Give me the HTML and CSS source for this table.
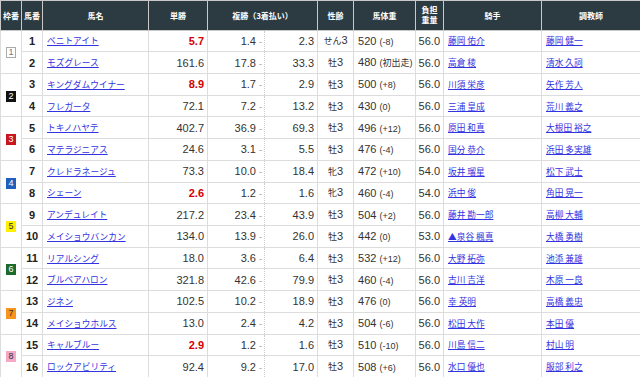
FILE: index.html
```html
<!DOCTYPE html>
<html>
<head>
    <meta charset="utf-8">
    <title>出馬表</title>
    <link rel="stylesheet" href="styles.css">
</head>
<body>
    <table class="race">
        <colgroup>
            <col style="width:21px">
            <col style="width:21px">
            <col style="width:106px">
            <col style="width:59px">
            <col style="width:57px">
            <col style="width:53px">
            <col style="width:36px">
            <col style="width:62px">
            <col style="width:28px">
            <col style="width:98px">
            <col style="width:99px">
        </colgroup>
        <thead>
            <tr>
                <th>枠番</th>
                <th>馬番</th>
                <th>馬名</th>
                <th>単勝</th>
                <th colspan="2">複勝（3着払い）</th>
                <th>性齢</th>
                <th>馬体重</th>
                <th class="load">負担<br>重量</th>
                <th>騎手</th>
                <th>調教師</th>
            </tr>
        </thead>
        <tbody id="rows"></tbody>
    </table>
<script>
var horses = [
    [1, "ベニトアイト", "5.7", true, "1.4", "2.3", "せん", "520", "(-8)", "56.0", "藤岡 佑介", "藤岡 健一"],
    [2, "モズグレース", "161.6", false, "17.8", "33.3", "牡", "480", "(初出走)", "56.0", "高倉 稜", "清水 久詞"],
    [3, "キングダムウイナー", "8.9", true, "1.7", "2.9", "牡", "500", "(+8)", "56.0", "川須 栄彦", "矢作 芳人"],
    [4, "フレガータ", "72.1", false, "7.2", "13.2", "牡", "430", "(0)", "56.0", "三浦 皇成", "荒川 義之"],
    [5, "トキノハヤテ", "402.7", false, "36.9", "69.3", "牡", "496", "(+12)", "56.0", "原田 和真", "大根田 裕之"],
    [6, "マテラジニアス", "24.6", false, "3.1", "5.5", "牡", "476", "(-4)", "56.0", "国分 恭介", "浜田 多実雄"],
    [7, "クレドラネージュ", "73.3", false, "10.0", "18.4", "牝", "472", "(+10)", "54.0", "坂井 瑠星", "松下 武士"],
    [8, "シェーン", "2.6", true, "1.2", "1.6", "牝", "460", "(-4)", "54.0", "浜中 俊", "角田 晃一"],
    [9, "アンデュレイト", "217.2", false, "23.4", "43.9", "牡", "504", "(+2)", "56.0", "藤井 勘一郎", "高柳 大輔"],
    [10, "メイショウバンカン", "134.0", false, "13.9", "26.0", "牡", "442", "(0)", "53.0", "▲泉谷 楓真", "大橋 勇樹"],
    [11, "リアルシング", "18.0", false, "3.6", "6.4", "牡", "532", "(+12)", "56.0", "大野 拓弥", "池添 兼雄"],
    [12, "ブルベアハロン", "321.8", false, "42.6", "79.9", "牡", "460", "(-4)", "56.0", "古川 吉洋", "木原 一良"],
    [13, "ジネン", "102.5", false, "10.2", "18.9", "牡", "476", "(0)", "56.0", "幸 英明", "高橋 義忠"],
    [14, "メイショウホルス", "13.0", false, "2.4", "4.2", "牡", "504", "(-6)", "56.0", "松田 大作", "本田 優"],
    [15, "キャルブルー", "2.9", true, "1.2", "1.6", "牡", "510", "(-10)", "56.0", "川島 信二", "村山 明"],
    [16, "ロックアビリティ", "92.4", false, "9.2", "17.0", "牡", "508", "(+6)", "56.0", "水口 優也", "服部 利之"]
];

var html = "";
for (var i = 0; i < horses.length; i++) {
    var h = horses[i];
    var frame = Math.floor(i / 2) + 1;
    html += "<tr>";
    if (i % 2 == 0) {
        html += '<td rowspan="2" class="waku"><span class="badge w' + frame + '">' + frame + '</span></td>';
    }
    html += '<td class="num">' + h[0] + '</td>';
    html += '<td class="name"><a href="#">' + h[1] + '</a></td>';
    html += '<td class="odds' + (h[3] ? ' fav' : '') + '">' + h[2] + '</td>';
    html += '<td class="place-lo">' + h[4] + ' <span class="dash">-</span></td>';
    html += '<td class="place-hi">' + h[5] + '</td>';
    html += '<td class="sex"><span class="jp">' + h[6] + '</span>3</td>';
    html += '<td class="weight">' + h[7] + ' <span class="diff">' + h[8] + '</span></td>';
    html += '<td class="load">' + h[9] + '</td>';
    html += '<td class="person"><a href="#">' + h[10] + '</a></td>';
    html += '<td class="person"><a href="#">' + h[11] + '</a></td>';
    html += "</tr>";
}
document.getElementById("rows").innerHTML = html;
</script>
</body>
</html>
```

FILE: styles.css
```css
body {
    margin: 0;
    background-color: #fff;
    font-family: "Liberation Sans", "Noto Sans CJK JP", sans-serif;
    color: #333;
}

.race {
    width: 640px;
    border-collapse: collapse;
    table-layout: fixed;
}

.race th,
.race td {
    border: 1px solid #ddd;
    padding: 0;
    white-space: nowrap;
    overflow: hidden;
}

.race thead tr {
    height: 29.5px;
}

.race th {
    background-color: #2c3a41;
    border-color: #c9c9c9;
    color: #fff;
    font-family: "Noto Sans CJK JP", sans-serif;
    font-size: 8px;
    font-weight: bold;
    text-align: center;
}

.race th.load {
    line-height: 10px;
}

.race tbody tr {
    height: 21.73px;
}

.race td {
    font-size: 11px;
    vertical-align: middle;
}

.race a {
    color: #3333e0;
    text-decoration: underline;
}

td.waku {
    text-align: center;
}

.badge {
    display: inline-block;
    width: 10px;
    height: 11px;
    line-height: 11px;
    font-size: 9px;
    text-align: center;
    color: #fff;
}

.w1 { background-color: #fff; color: #777; box-shadow: inset 0 0 0 1px #aaa; }
.w2 { background-color: #111; }
.w3 { background-color: #c8171e; }
.w4 { background-color: #1f5fbe; }
.w5 { background-color: #fff000; color: #333; }
.w6 { background-color: #1c6b2c; }
.w7 { background-color: #f7941d; color: #333; }
.w8 { background-color: #f5a9c6; color: #333; }

td.num {
    text-align: center;
    font-weight: bold;
    color: #222;
}

td.name {
    padding-left: 4px;
}

td.name a,
td.person a {
    font-family: "Noto Sans CJK JP", sans-serif;
    font-size: 8.7px;
}

td.odds {
    text-align: right;
    padding-right: 3px;
}

td.odds.fav {
    color: #d40000;
    font-weight: bold;
}

td.place-lo {
    text-align: right;
    padding-right: 2px;
    border-right: 1px dotted #ccc;
}

td.place-hi {
    text-align: right;
    padding-right: 3px;
    border-left: none;
}

.dash {
    color: #999;
    font-size: 9px;
}

td.sex {
    text-align: center;
}

.jp {
    font-family: "Noto Sans CJK JP", sans-serif;
    font-size: 9px;
}

td.weight {
    padding-left: 4px;
}

.diff {
    font-size: 9px;
}

td.load {
    text-align: right;
    padding-right: 3px;
}

td.person {
    padding-left: 4px;
}
```
